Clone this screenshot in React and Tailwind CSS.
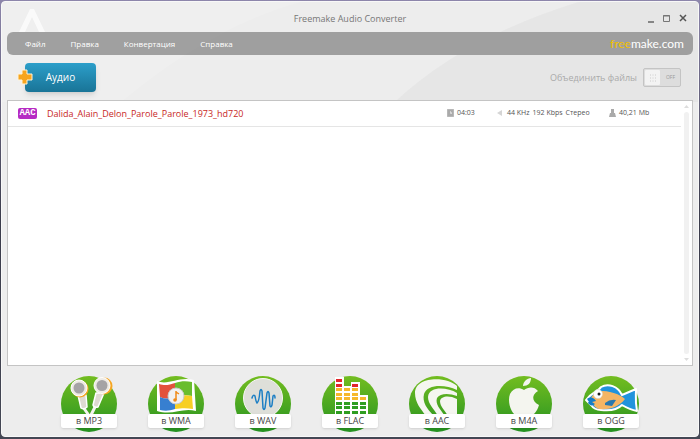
const menuItems = ['Файл', 'Правка', 'Конвертация', 'Справка'];

const files = [
    { codec: 'AAC', name: 'Dalida_Alain_Delon_Parole_Parole_1973_hd720', duration: '04:03', rate: '44 KHz', bitrate: '192 Kbps', channels: 'Стерео', size: '40,21 Mb' },
];

function EarphonesIcon() {
    return (
        <>
            <path d="M22 31 29 41M35 29 29 41" stroke="#f6f5f0" strokeWidth="3" />
            <path d="M17 19h8l1 12q-3 3-6 1z" fill="#dedad2" stroke="#fff" strokeWidth="1.5" strokeLinejoin="round" />
            <path d="M35 17h8l-6 14q-4 1-5-2z" fill="#dedad2" stroke="#fff" strokeWidth="1.5" strokeLinejoin="round" />
            <circle cx="19" cy="13" r="8.5" fill="#f5a623" />
            <circle cx="18" cy="12" r="8" fill="#eeeae4" stroke="#fff" />
            <circle cx="18" cy="12" r="5.5" fill="#a5a3a5" />
            <circle cx="43" cy="10" r="8.5" fill="#f5a623" />
            <circle cx="41" cy="9.5" r="8" fill="#eeeae4" stroke="#fff" />
            <circle cx="41" cy="9.5" r="5.5" fill="#a5a3a5" />
        </>
    );
}

function FlagIcon() {
    return (
        <>
            <path d="M9 5c11 5 22-5 37-1l2 31c-14-4-23 5-39 0z" fill="#fff" />
            <path d="M11 8c6 2 10 1 16-1v14c-6 2-10 2-15 0z" fill="#e2523b" />
            <path d="M27 7c6-2 11-2 17-1v14c-6-1-11-1-17 1z" fill="#69bd2d" />
            <path d="M12 21c5 2 9 2 15 0v12c-6 2-10 2-15 1z" fill="#377fd0" />
            <path d="M27 21c6-2 11-2 17-1l1 13c-6-1-11-1-18 0z" fill="#f7cf24" />
            <circle cx="28" cy="20" r="8" fill="#f1f1f1" stroke="#c9c9c9" />
            <path d="M28 15v9M28 16l3 2" stroke="#f08a18" strokeWidth="1.5" fill="none" />
            <circle cx="27" cy="24" r="1.8" fill="#f08a18" />
        </>
    );
}

function WaveIcon() {
    return (
        <>
            <circle cx="28" cy="22" r="19.5" fill="#dedfd9" stroke="#f7f7f4" />
            <path
                d="M17 22q1-4 3-2 1 6 2 7 2-1 3-12 1-3 2 0l1 17q1 3 2 0l2-15q1-3 2 0l1 13q1 2 2-1l1-9q2-2 2 2"
                fill="none"
                stroke="#1c7fc4"
                strokeWidth="1.5"
                strokeLinecap="round"
            />
        </>
    );
}

const equalizer = [
    { x: 14, top: 3, red: 2 },
    { x: 22, top: 12, red: 0 },
    { x: 30, top: 8, red: 1 },
    { x: 38, top: 21, red: 0 },
];

function EqualizerIcon() {
    return (
        <>
            {equalizer.map(({ x, top }) => (
                <rect key={x} x={x - 1} y={top - 2} width="9" height={42 - top} fill="#fff" />
            ))}
            {equalizer.map(({ x, top, red }) =>
                [3, 8, 12, 17, 21, 26, 30, 35].filter((y) => y >= top).map((y, i) => (
                    <rect key={`${x}-${y}`} x={x} y={y} width="6" height="3" fill={i < red ? '#e2262b' : y < 24 ? '#f6b82b' : '#2f9e22'} />
                ))
            )}
        </>
    );
}

function SwirlIcon() {
    return (
        <g fill="#f5f6f0">
            <path d="M48 10C38 0 6 0 6 17c0 10 6 16 11 23h8C18 33 13 26 15 18 18 8 36 8 48 14z" />
            <path d="M48 17C38 11 20 10 19 21c0 7 6 12 10 19h7C31 33 26 28 28 22c3-5 12-5 20-2z" />
            <path d="M48 23c-8-4-16-3-17 2 0 6 5 9 8 15h9z" />
        </g>
    );
}

function AppleIcon() {
    return (
        <g fill="#f4f5ef">
            <path d="M27 10c0-4 4-8 8-8 0 5-3 8-8 8z" />
            <path d="M28 14c4-3 10-4 14 1-7 4-6 11 1 14-2 7-6 11-10 11-2 0-4-1-5-1s-4 1-6 1c-7-1-11-15-8-22 3-6 9-7 14-4z" />
        </g>
    );
}

function FishIcon() {
    return (
        <>
            <path
                d="M3 24C9 16 16 15 18 11c7-4 17-1 21 8l14-6c0 8-1 12 1 22-6-1-10-3-15-6-5 5-13 6-21 5-5 0-8-2-10-5z"
                fill="#2193dc"
                stroke="#fff"
                strokeWidth="2"
                strokeLinejoin="round"
            />
            <path d="M8 22c4-8 12-8 19-6 8 2 12 4 15 7-7 9-17 11-26 10-4-1-8-6-8-11z" fill="#f5b563" />
            <path d="M4 23c4-3 7-1 9 2l-4 1 3 2c-2 2-5 2-7-1l1-2z" fill="#147dc8" />
            <path d="M22 27q5-4 11-3l-4 6-7-1z" fill="#2878ae" />
            <circle cx="15" cy="18" r="4.5" fill="#fff" stroke="#d5d5c5" strokeWidth=".5" />
            <circle cx="16" cy="18" r="1.5" fill="#222" />
        </>
    );
}

const formats = [
    { label: 'MP3', Icon: EarphonesIcon },
    { label: 'WMA', Icon: FlagIcon },
    { label: 'WAV', Icon: WaveIcon },
    { label: 'FLAC', Icon: EqualizerIcon },
    { label: 'AAC', Icon: SwirlIcon },
    { label: 'M4A', Icon: AppleIcon },
    { label: 'OGG', Icon: FishIcon },
];

function FormatButton({ label, Icon }) {
    return (
        <button type="button" className="relative h-14 w-14">
            <svg viewBox="0 0 56 56" className="h-14 w-14">
                <defs>
                    <linearGradient id={`green-${label}`} x1="0" y1="0" x2="0" y2="1">
                        <stop offset="0" stopColor="#73bd20" />
                        <stop offset="1" stopColor="#259322" />
                    </linearGradient>
                </defs>
                <circle cx="28" cy="28" r="28" fill={`url(#green-${label})`} />
                <Icon />
            </svg>
            <span className="absolute inset-x-0 bottom-1 h-[14px] rounded-xs bg-white text-center text-[9px] leading-[14px] text-[#444] shadow">
                в {label}
            </span>
        </button>
    );
}

function Sheen() {
    return (
        <svg viewBox="0 0 700 100" preserveAspectRatio="none" className="pointer-events-none absolute inset-x-0 top-0 h-[100px] w-full">
            <path d="M0 0H300Q210 25 120 100H0z" fill="#fff" opacity=".12" />
            <path d="M395 100Q465 35 580 0H700V100z" fill="#888" opacity=".07" />
        </svg>
    );
}

function TitleBar() {
    return (
        <header className="grid h-[30px] grid-cols-[1fr_auto_1fr] items-center">
            <svg viewBox="0 0 26 24" className="ml-3 h-6 w-[26px] self-end">
                <path d="M0 24 11 1h4l11 23h-6L13 9 6 24z" fill="#fff" opacity=".7" />
            </svg>
            <h1 className="pt-1 text-[9px] text-[#777]">Freemake Audio Converter</h1>
            <div className="flex justify-end gap-1 pt-1 pr-1">
                <button type="button" aria-label="Свернуть" className="text-[#666]">
                    <svg viewBox="0 0 12 12" className="h-3 w-3"><path d="M3 9h6" stroke="currentColor" strokeWidth="1.5" /></svg>
                </button>
                <button type="button" aria-label="Развернуть" className="text-[#777]">
                    <svg viewBox="0 0 12 12" className="h-3 w-3"><path d="M2.5 2.5h6v6h-6zM2 3h7" fill="none" stroke="currentColor" /></svg>
                </button>
                <button type="button" aria-label="Закрыть" className="text-[#555]">
                    <svg viewBox="0 0 12 12" className="h-3 w-3"><path d="m3 2 6 6M9 2 3 8" stroke="currentColor" strokeWidth="1.5" /></svg>
                </button>
            </div>
        </header>
    );
}

function MenuBar() {
    return (
        <nav className="flex h-[23px] items-center justify-between rounded-md bg-[#9b9b9b]/95 pr-[9px] pl-[18px]">
            <div className="flex gap-[25px] text-[8px] text-white">
                {menuItems.map((item) => (
                    <button key={item} type="button">{item}</button>
                ))}
            </div>
            <a href="#freemake" className="font-[Lato,sans-serif] text-[12px] text-white">
                <span className="text-[#f0c000]">free</span>make.com
            </a>
        </nav>
    );
}

function Toolbar() {
    return (
        <div className="flex h-[45px] items-center justify-between pr-3 pl-[18px]">
            <button type="button" className="relative h-[29px] w-[71px] rounded bg-linear-to-b from-[#2c9fca] to-[#197497] text-[10px] text-white shadow-md">
                Аудио
                <svg viewBox="0 0 16 16" className="absolute top-1.5 -left-2 h-4 w-4">
                    <path d="M5 1h5v4h5v6h-5v4H5v-4H1V5h4z" fill="#f7a51e" stroke="#fff3d8" strokeLinejoin="round" />
                </svg>
            </button>
            <label className="flex items-center gap-[6px] text-[9px] text-[#aaa]">
                Объединить файлы
                <span className="relative flex h-[19px] w-[38px] items-center">
                    <input type="checkbox" className="h-full w-full appearance-none rounded-xs border border-[#c4c4c4] bg-[#ddd]" />
                    <span className="pointer-events-none absolute inset-y-px left-px flex w-[17px] items-center justify-center rounded-xs border border-[#ddd] bg-[#f3f3f3]">
                        <svg viewBox="0 0 8 8" className="h-2 w-2"><path d="M1 1h6M1 4h6M1 7h6" stroke="#ccc" strokeDasharray="1 1.5" /></svg>
                    </span>
                    <span className="pointer-events-none absolute right-1.5 text-[5px] text-[#999]">OFF</span>
                </span>
            </label>
        </div>
    );
}

function Detail({ icon, children }) {
    return (
        <td>
            <div className="flex items-center gap-[3px]">
                <svg viewBox="0 0 7 8" className="h-2 w-[7px] shrink-0">{icon}</svg>
                {children}
            </div>
        </td>
    );
}

function FileRow({ file }) {
    return (
        <tr className="h-[25px] border-b border-[#e5e5e5]">
            <td className="pl-[10px]">
                <span className="block h-[11px] w-[19px] rounded-xs bg-[#b62bc4] text-center font-mono text-[9px] leading-[11px] font-bold text-white">
                    {file.codec}
                </span>
            </td>
            <td className="text-[9px] text-[#c8281e]">{file.name}</td>
            <Detail icon={<path d="M0 0h7v8H0zM3.5 2v2.5H5" fill="#aaa" stroke="#ddd" strokeWidth=".5" />}>{file.duration}</Detail>
            <Detail icon={<path d="M0 4 5 1v6z" fill="#d5d5d5" />}>
                <span>{file.rate}</span>
                <span>{file.bitrate}</span>
                <span>{file.channels}</span>
            </Detail>
            <Detail icon={<path d="M2 0h3v4h1l1 4H0l1-4h1z" fill="#aaa" />}>{file.size}</Detail>
        </tr>
    );
}

function FileList() {
    return (
        <main className="flex flex-1 border border-[#c4c4c4] bg-white">
            <div className="flex-1">
                <table className="w-full table-fixed border-collapse text-[7px] text-[#555]">
                    <colgroup>
                        <col className="w-[39px]" />
                        <col />
                        <col className="w-[50px]" />
                        <col className="w-[112px]" />
                        <col className="w-[72px]" />
                    </colgroup>
                    <tbody>
                        {files.map((file) => <FileRow key={file.name} file={file} />)}
                    </tbody>
                </table>
            </div>
            <div className="flex w-[11px] flex-col items-center gap-1 py-1">
                <svg viewBox="0 0 5 3" className="h-[3px] w-[5px]"><path d="M0 3 2.5 0 5 3z" fill="#ddd" /></svg>
                <div className="w-[5px] flex-1 rounded-full bg-[#f1f1f1]" />
                <svg viewBox="0 0 5 3" className="h-[3px] w-[5px]"><path d="m0 0 2.5 3L5 0z" fill="#ddd" /></svg>
            </div>
        </main>
    );
}

export default function App() {
    return (
        <div className="flex min-h-screen bg-linear-to-b from-[#8d86ab] via-[#3b3c4b] to-[#444754] px-px pt-px pb-[2px] font-['Open_Sans','Noto_Sans',sans-serif]">
            <div className="relative flex flex-1 flex-col rounded-sm border border-[#f8f8f8] bg-[#ededed] px-[5px]">
                <Sheen />
                <div className="relative flex flex-1 flex-col">
                    <TitleBar />
                    <MenuBar />
                    <Toolbar />
                    <FileList />
                    <footer className="flex h-[70px] justify-center gap-[31px] pt-[10px]">
                        {formats.map((format) => <FormatButton key={format.label} {...format} />)}
                    </footer>
                </div>
            </div>
        </div>
    );
}
